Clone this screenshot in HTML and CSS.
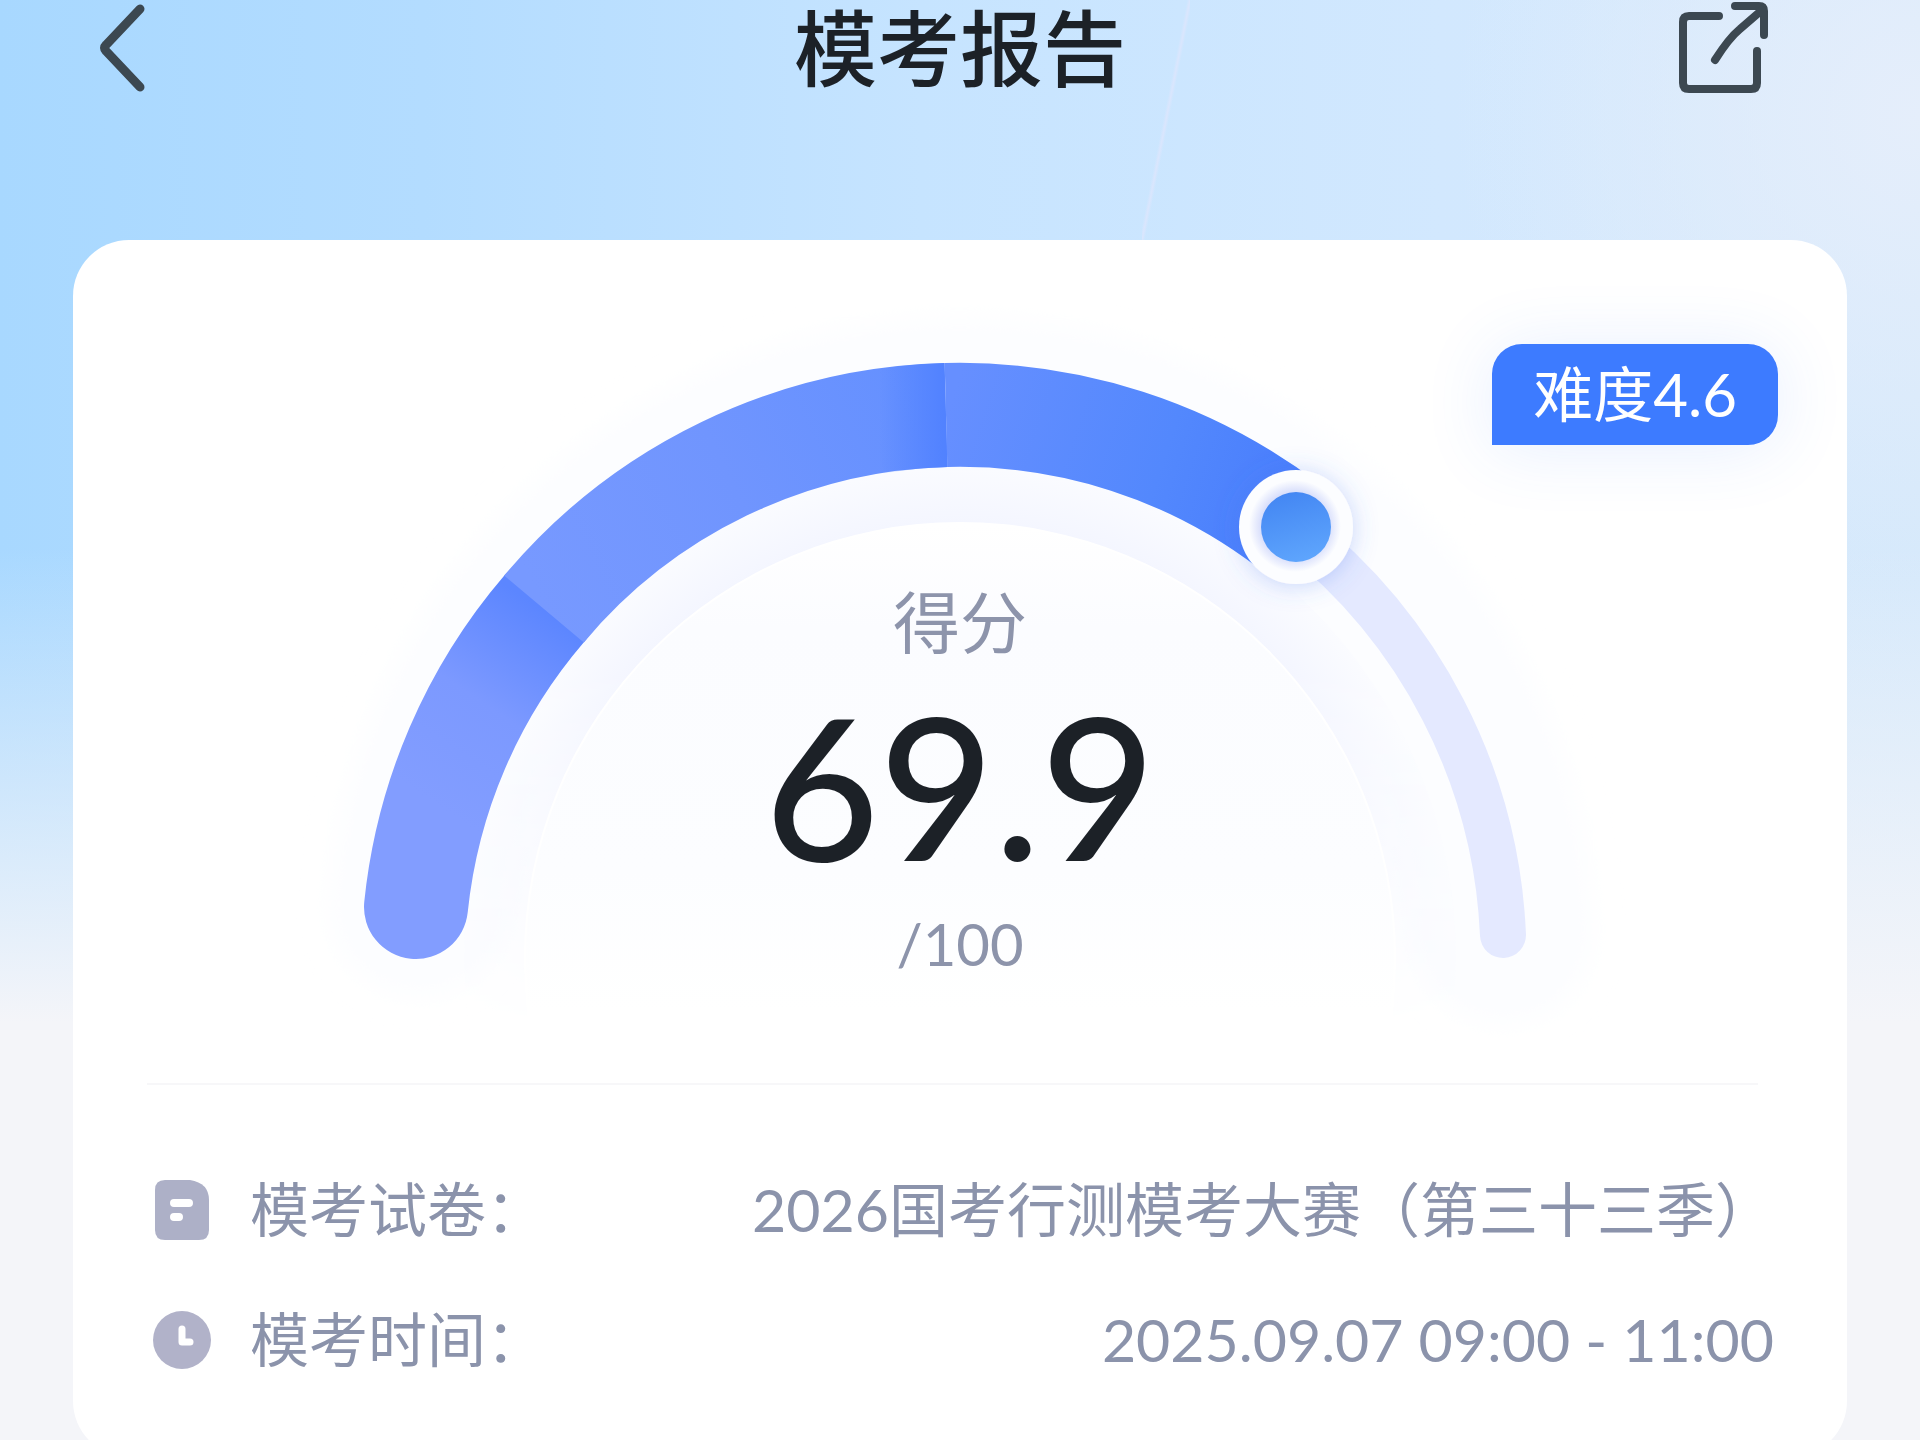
FILE: index.html
```html
<!DOCTYPE html>
<html lang="zh-CN">
<head>
<meta charset="UTF-8" />
<meta name="viewport" content="width=device-width, initial-scale=1" />
<title>模考报告</title>
<link rel="stylesheet" href="styles.css">
</head>
<body>
  <!-- Top bar -->
  <header class="topbar">
    <button class="icon-button" type="button" aria-label="返回">
      <svg width="52" height="96" viewBox="0 0 52 96" fill="none" stroke="currentColor" stroke-width="9" stroke-linecap="round" stroke-linejoin="round">
        <path d="M44 9 L10 45 Q7 48 10 51 L44 87" />
      </svg>
    </button>
    <h1>模考报告</h1>
    <button class="icon-button" type="button" aria-label="分享">
      <svg width="96" height="96" viewBox="0 0 96 96" fill="none" stroke="currentColor" stroke-width="8" stroke-linecap="round" stroke-linejoin="round">
        <path d="M43 16 H13 Q7 16 7 22 V83 Q7 89 13 89 H75 Q81 89 81 83 V51" />
        <path d="M59 6 H83 Q88 6 88 11 V35" />
        <path d="M39 60 Q53 38 64 29 L86 10" />
      </svg>
    </button>
  </header>

  <main class="card">
    <span class="badge">难度4.6</span>

    <!-- Score gauge -->
    <section class="gauge" aria-label="得分">
      <svg class="gauge-arc" viewBox="0 0 1400 843" fill="none">
        <defs>
          <linearGradient id="seg1" gradientUnits="userSpaceOnUse" x1="170" y1="560" x2="292" y2="376">
            <stop offset="0" stop-color="#829dff" />
            <stop offset="0.5" stop-color="#7c99ff" />
            <stop offset="1" stop-color="#5c86ff" />
          </linearGradient>
          <linearGradient id="seg2" gradientUnits="userSpaceOnUse" x1="284" y1="369" x2="686" y2="175">
            <stop offset="0" stop-color="#7799ff" />
            <stop offset="0.5" stop-color="#7095fe" />
            <stop offset="1" stop-color="#6490ff" />
          </linearGradient>
          <linearGradient id="seg2edge" gradientUnits="userSpaceOnUse" x1="620" y1="0" x2="686" y2="0">
            <stop offset="0" stop-color="#4f80ff" stop-opacity="0" />
            <stop offset="1" stop-color="#4f80ff" stop-opacity="0.9" />
          </linearGradient>
          <linearGradient id="seg3" gradientUnits="userSpaceOnUse" x1="686" y1="175" x2="1035" y2="289">
            <stop offset="0" stop-color="#668fff" />
            <stop offset="0.6" stop-color="#5388fd" />
            <stop offset="1" stop-color="#487dfc" />
          </linearGradient>
          <linearGradient id="dot" x1="0.4" y1="0" x2="0.7" y2="1">
            <stop offset="0" stop-color="#4487f3" />
            <stop offset="1" stop-color="#5fa6fd" />
          </linearGradient>
          <radialGradient id="dotShade">
            <stop offset="0.7" stop-color="#d3dafb" />
            <stop offset="1" stop-color="#fcfdff" />
          </radialGradient>
          <radialGradient id="ring" gradientUnits="userSpaceOnUse" cx="700" cy="718" r="500">
            <stop offset="0.87" stop-color="#f4f6ff" />
            <stop offset="1" stop-color="#fbfcff" />
          </radialGradient>
          <linearGradient id="disc" x1="0" y1="0" x2="0" y2="1">
            <stop offset="0" stop-color="#ffffff" />
            <stop offset="0.12" stop-color="#fbfcff" />
            <stop offset="0.4" stop-color="#fcfdff" />
            <stop offset="0.56" stop-color="#ffffff" />
          </linearGradient>
          <linearGradient id="fade" x1="0" y1="0" x2="0" y2="1">
            <stop offset="0.5" stop-color="#ffffff" />
            <stop offset="0.94" stop-color="#000000" />
          </linearGradient>
          <mask id="fadeMask">
            <rect width="1400" height="843" fill="url(#fade)" />
          </mask>
          <filter id="soft" x="-20%" y="-20%" width="140%" height="140%">
            <feGaussianBlur stdDeviation="14" />
          </filter>
          <filter id="knobShadow" x="-50%" y="-50%" width="200%" height="200%">
            <feDropShadow dx="0" dy="2" stdDeviation="12" flood-color="#4a78f0" flood-opacity="0.3" />
          </filter>
        </defs>

        <!-- halo and inner dial -->
        <path d="M159 667 A543 543 0 0 1 1243 695" stroke="#fcfdff" stroke-width="180" stroke-linecap="round" filter="url(#soft)" />
        <g mask="url(#fadeMask)">
          <circle cx="700" cy="718" r="496" fill="url(#ring)" />
          <circle cx="700" cy="718" r="436" fill="#ffffff" />
        </g>
        <circle cx="700" cy="718" r="434" fill="url(#disc)" />

        <!-- track -->
        <path d="M1035 291 A543 543 0 0 1 1243 695" stroke="#e4e9ff" stroke-width="46" stroke-linecap="round" />

        <!-- progress -->
        <path d="M156 667 A543 543 0 0 1 284 369" stroke="url(#seg1)" stroke-width="104" stroke-linecap="round" />
        <path d="M284 369 A543 543 0 0 1 686 175" stroke="url(#seg2)" stroke-width="104" />
        <path d="M615 182 A543 543 0 0 1 686 175" stroke="url(#seg2edge)" stroke-width="104" />
        <path d="M686 175 A543 543 0 0 1 1029 286" stroke="url(#seg3)" stroke-width="104" />

        <circle cx="1036" cy="287" r="57" fill="#fcfdff" filter="url(#knobShadow)" />
        <circle cx="1035" cy="286" r="46" fill="url(#dotShade)" />
        <circle cx="1036" cy="287" r="35" fill="url(#dot)" />
      </svg>
      <div class="score">
        <p class="score-label">得分</p>
        <p class="score-value">69.9</p>
        <p class="score-total">/100</p>
      </div>
    </section>

    <hr class="divider" />

    <!-- Exam info -->
    <dl class="info">
      <div class="info-row">
        <dt>
          <svg width="60" height="60" viewBox="0 0 60 60">
            <path d="M13 0 H38 Q57 3 57 20 V50 Q57 60 47 60 H13 Q3 60 3 50 V10 Q3 0 13 0Z" fill="#adb0c7" />
            <path d="M22 23 H37 M22 37 H27" stroke="#fff" stroke-width="8" stroke-linecap="round" />
          </svg>
          模考试卷：
        </dt>
        <dd>2026国考行测模考大赛（第三十三季）</dd>
      </div>
      <div class="info-row">
        <dt>
          <svg width="60" height="60" viewBox="0 0 60 60">
            <circle cx="30" cy="30" r="29" fill="#b1b2c9" />
            <path d="M30 19 V32 H38" fill="none" stroke="#fff" stroke-width="7" stroke-linecap="round" stroke-linejoin="round" />
          </svg>
          模考时间：
        </dt>
        <dd>2025.09.07 09:00 - 11:00</dd>
      </div>
    </dl>
  </main>
</body>
</html>
```
FILE: styles.css
```css
/* Reset and base styles */
* {
  margin: 0;
  padding: 0;
  box-sizing: border-box;
}
body {
  height: 100vh;
  overflow: hidden;
  font-family: Lato, "Noto Sans CJK SC", sans-serif;
  color: #1c2127;
  background:
    linear-gradient(to bottom right, transparent 47%, #dae6fd 50%, transparent 53%) 61% 0 / 48px 240px no-repeat,
    linear-gradient(180deg, rgb(244 245 249 / 0) 38%, #f4f5f9 71%),
    radial-gradient(circle at 100% 8%, #e5eefb 0%, rgb(229 238 251 / 0) 20%),
    linear-gradient(90deg, #a8d8ff 0%, #b3dcff 22%, #c6e4ff 48%, #d2e8fe 75%, #d6e9fb 100%);
}

/* Top bar */
.topbar {
  display: grid;
  grid-template-columns: 96px 1fr 96px;
  align-items: center;
  height: 96px;
  padding: 0 148px 0 96px;
}
.topbar h1 {
  padding-left: 52px;
  font-size: 83px;
  line-height: 94px;
  font-weight: 500;
  text-align: center;
}
.icon-button {
  display: flex;
  width: 96px;
  height: 96px;
  border: none;
  background: none;
  color: #3c4851;
  cursor: pointer;
}

/* Report card */
.card {
  position: relative;
  margin: 144px 73px 0;
  background: #fff;
  border-radius: 56px;
}
.badge {
  position: absolute;
  top: 104px;
  right: 69px;
  padding: 0 41px;
  font-size: 60px;
  line-height: 101px;
  color: #fff;
  background: #3d7bff;
  border-radius: 30px 30px 30px 0;
  box-shadow: 0 4px 70px rgb(61 123 255 / 0.12);
}

/* Gauge */
.gauge {
  display: grid;
  justify-items: center;
}
.gauge-arc,
.score {
  grid-area: 1 / 1;
}
.gauge-arc {
  width: 1400px;
  max-width: 100%;
}
.score {
  padding-top: 342px;
  text-align: center;
  color: #8d94ab;
}
.score-label {
  font-size: 67px;
  line-height: 80px;
}
.score-value {
  margin: 23px 0;
  font-size: 198px;
  line-height: 200px;
  font-weight: 500;
  color: #1c2127;
}
.score-total {
  font-size: 58px;
  line-height: 72px;
}

/* Exam info */
.divider {
  height: 2px;
  margin: 0 89px 0 74px;
  border: none;
  background: #f7f7f9;
}
.info {
  display: flex;
  flex-direction: column;
  gap: 50px;
  margin: 0 73px;
  padding: 85px 0 77px;
  font-size: 59px;
  line-height: 80px;
  color: #8b93ab;
}
.info-row {
  display: flex;
  justify-content: space-between;
}
.info-row dt {
  display: flex;
  align-items: center;
  gap: 38px;
  padding-left: 6px;
}
```
